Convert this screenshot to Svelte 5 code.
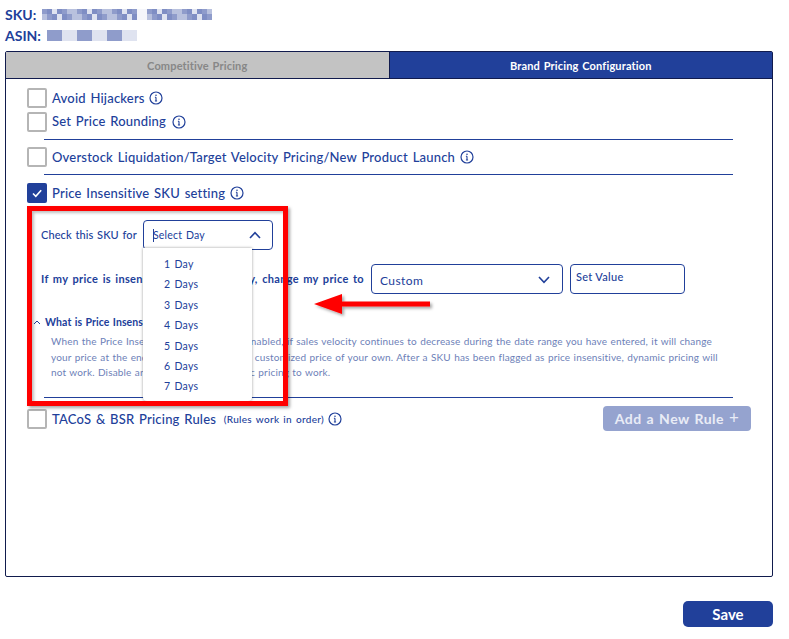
<script>
  // mosaic cells standing in for the blurred SKU / ASIN values
  const shades = ["#8f9ccb", "#c9d0e6", "#a9b4d8", "#dfe3f0", "#7f8ec4", "#b8c1de", "#eef0f7"];
  const skuCells = Array.from({ length: 68 }, (_, i) => (i % 34 === 19 || i % 34 === 20 ? "#f4f5fa" : shades[(i * i + 3 * i) % 7]));
  const asinCells = Array.from({ length: 36 }, (_, i) => shades[(i * 5 + (i % 3)) % 6]);
  const days = ["1 Day", "2 Days", "3 Days", "4 Days", "5 Days", "6 Days", "7 Days"];
</script>

{#snippet info()}
  <svg class="info" viewBox="0 0 14 14" width="14" height="14">
    <circle cx="7" cy="7" r="6" fill="none" stroke="#21409a" stroke-width="1.2" />
    <path d="M7 6.2V10M5.9 10h2.2M5.9 6.2H7" fill="none" stroke="#21409a" stroke-width="1.1" />
    <circle cx="7" cy="4.2" r="0.8" fill="#21409a" />
  </svg>
{/snippet}

<div class="page">
  <div class="ids">
    <div class="id-row sku">
      <b>SKU:</b>
      <span class="mosaic sku-grid">{#each skuCells as c}<i style:background={c}></i>{/each}</span>
    </div>
    <div class="id-row asin">
      <b>ASIN:</b>
      <span class="mosaic asin-grid">{#each asinCells as c}<i style:background={c}></i>{/each}</span>
    </div>
  </div>

  <div class="card">
    <div class="tabs">
      <div class="tab off">Competitive Pricing</div>
      <div class="tab on">Brand Pricing Configuration</div>
    </div>

    <div class="body">
      <label class="check first"><span class="box"></span>Avoid Hijackers {@render info()}</label>
      <label class="check second"><span class="box"></span><span class="up">Set Price Rounding</span>{@render info()}</label>
      <hr class="rule r1" />
      <label class="check"><span class="box"></span>Overstock Liquidation/Target Velocity Pricing/New Product Launch {@render info()}</label>
      <hr class="rule r2" />
      <label class="check"><span class="box checked">
        <svg viewBox="0 0 20 20" width="20" height="20"><path d="M6 10.5l2.8 2.8L14.2 7.2" fill="none" stroke="#fff" stroke-width="1.6" /></svg>
      </span>Price Insensitive SKU setting {@render info()}</label>

      <div class="settings">
        <div class="line one">
          <span class="lbl">Check this SKU for</span>
          <div class="select day">
            <span class="caret"></span>Select Day
            <svg viewBox="0 0 12 8" width="12" height="8"><path d="M1 7l5-5.4L11 7" fill="none" stroke="#21409a" stroke-width="1.6" /></svg>
          </div>
        </div>
        <div class="line two">
          <span class="lbl strong">If my price is insensitive on the last day, change my price to</span>
          <div class="select custom">
            Custom
            <svg viewBox="0 0 12 8" width="12" height="8"><path d="M1 1l5 5.4L11 1" fill="none" stroke="#21409a" stroke-width="1.6" /></svg>
          </div>
          <div class="value">Set Value</div>
        </div>
        <div class="what">
          <svg viewBox="0 0 8 6" width="8" height="6"><path d="M1 5l3-3 3 3" fill="none" stroke="#21409a" stroke-width="1" /></svg>
          What is Price Insensitive SKU setting?
        </div>
        <p class="help">
          When the Price Insensitive SKU setting is enabled, if sales velocity continues to decrease during the date range you have entered, it will change<br />
          your price at the end of the date range to a customized price of your own. After a SKU has been flagged as price insensitive, dynamic pricing will<br />
          not work. Disable and re-enable for dynamic pricing to work.
        </p>
      </div>
      <hr class="rule r3" />

      <div class="rules-row">
        <label class="check tacos"><span class="box"></span>TACoS &amp; BSR Pricing Rules <small>(Rules work in order)</small> {@render info()}</label>
        <button class="add">Add a New Rule <span>+</span></button>
      </div>
    </div>
  </div>

  <div class="foot"><button class="save">Save</button></div>

  <!-- overlays: open dropdown and the red annotation on top of the page -->
  <ul class="menu">
    {#each days as d}<li>{d}</li>{/each}
  </ul>
  <div class="redbox"></div>
  <svg class="arrow" viewBox="0 0 124 28" width="124" height="28">
    <defs>
      <filter id="sh" x="-10%" y="-30%" width="125%" height="170%">
        <feDropShadow dx="2" dy="2" stdDeviation="1.5" flood-color="#000" flood-opacity="0.35" />
      </filter>
    </defs>
    <path d="M1 12L29 2V9.5H117V14.5H29V22Z" fill="#f00" filter="url(#sh)" />
  </svg>
</div>

<style>
  :global(body) {
    margin: 0;
    background: #fff;
  }

  .page {
    position: relative;
    width: 789px;
    height: 639px;
    overflow: hidden;
    font-family: Lato, "Open Sans", sans-serif;
    color: #21409a;
    box-sizing: border-box;
    padding: 4px 16px 0 5px;
  }

  .id-row {
    display: flex;
    align-items: center;
    height: 20px;
    font-size: 14px;
    color: #21409a;
  }

  .id-row b {
    font-weight: 700;
    width: 37px;
  }

  .asin {
    margin-top: 1px;
  }

  .asin b {
    width: 42px;
  }

  .ids {
    height: 42px;
  }

  .mosaic {
    display: grid;
    height: 11px;
    grid-template-rows: 1fr 1fr;
    grid-auto-flow: row;
  }

  .sku-grid {
    width: 170px;
    grid-template-columns: repeat(34, 1fr);
  }

  .asin-grid {
    width: 90px;
    grid-template-columns: repeat(18, 1fr);
  }

  .mosaic i {
    display: block;
  }

  .card {
    margin-top: 5px;
    width: 768px;
    height: 526px;
    box-sizing: border-box;
    border: 1px solid #111b4d;
    border-radius: 2px;
    display: flex;
    flex-direction: column;
  }

  .tabs {
    display: flex;
    height: 26px;
    border-bottom: 1px solid #111b4d;
    font-size: 11px;
    font-weight: 700;
    letter-spacing: 0.15px;
    word-spacing: 1px;
  }

  .tab {
    flex: 1;
    display: flex;
    align-items: center;
    justify-content: center;
  }

  .off {
    background: #c3c3c3;
    color: #878787;
    border-right: 1px solid #111b4d;
  }

  .on {
    background: #21409a;
    color: #fff;
  }

  .body {
    padding: 9px 21px 0 21px;
    display: flex;
    flex-direction: column;
  }

  .check {
    display: flex;
    align-items: center;
    height: 20px;
    font-size: 13px;
    font-weight: 500;
    letter-spacing: 0.2px;
    word-spacing: 1.2px;
    white-space: pre;
  }

  .second {
    margin-top: 4px;
  }

  .up {
    margin: -2px 6px 0 0;
  }

  .box {
    flex: none;
    box-sizing: border-box;
    width: 20px;
    height: 20px;
    margin-right: 5px;
    border: 2px solid #b5b5b5;
    border-radius: 2px;
    background: #fff;
  }

  .box.checked {
    background: #21409a;
    border: 0;
    display: block;
  }

  .box svg {
    display: block;
  }

  .info {
    flex: none;
  }

  .rule {
    border: 0;
    height: 1px;
    background: #21409a;
    margin: 0 18px 0 17px;
  }

  .r1 {
    margin-top: 7px;
    margin-bottom: 7px;
  }

  .r2 {
    margin-top: 7px;
    margin-bottom: 8px;
  }

  .settings {
    height: 194px;
    padding-left: 14px;
    box-sizing: border-box;
    padding-top: 17px;
  }

  .line {
    display: flex;
    align-items: center;
    height: 30px;
  }

  .two {
    margin-top: 14px;
  }

  .lbl {
    font-size: 11px;
    font-weight: 500;
    letter-spacing: 0.1px;
    word-spacing: 0.8px;
    white-space: nowrap;
    margin-top: -2px;
  }

  .one .lbl {
    width: 102px;
  }

  .strong {
    width: 330px;
    font-weight: 700;
    letter-spacing: 0.3px;
    word-spacing: 1px;
    text-align: justify;
    text-align-last: justify;
    white-space: nowrap;
    box-sizing: border-box;
    padding-right: 7px;
  }

  .select {
    box-sizing: border-box;
    height: 30px;
    border: 1px solid #21409a;
    border-radius: 4px;
    display: flex;
    align-items: center;
    justify-content: space-between;
    background: #fff;
  }

  .day {
    width: 130px;
    padding: 0 11px 0 9px;
    font-size: 10.5px;
    letter-spacing: 0.2px;
    word-spacing: 0.8px;
    justify-content: flex-start;
  }

  .day svg {
    margin-left: auto;
  }

  .caret {
    width: 1px;
    height: 13px;
    background: #21409a;
    margin-right: -1px;
  }

  .custom {
    width: 192px;
    padding: 2px 12px 0 8px;
    font-size: 12px;
    letter-spacing: 0.4px;
  }

  .value {
    box-sizing: border-box;
    width: 115px;
    height: 30px;
    margin-left: 7px;
    padding: 5px 0 0 5px;
    border: 1px solid #21409a;
    border-radius: 4px;
    font-size: 11px;
    font-weight: 500;
    letter-spacing: 0.3px;
  }

  .what {
    display: flex;
    align-items: center;
    gap: 4px;
    margin: 22px 0 0 -8px;
    font-size: 10.5px;
    font-weight: 700;
    letter-spacing: 0.1px;
    word-spacing: 0.6px;
    white-space: nowrap;
  }

  .help {
    margin: 6px 0 0 10px;
    font-size: 10px;
    line-height: 15.5px;
    letter-spacing: 0.16px;
    word-spacing: 0.58px;
    color: #6d7fb8;
    white-space: nowrap;
  }

  .rules-row {
    display: flex;
    align-items: center;
    justify-content: space-between;
    height: 25px;
    margin-top: 8px;
    padding-right: 0;
  }

  .tacos small {
    font-size: 10px;
    letter-spacing: 0.3px;
    margin: 0 4px 0 3px;
  }

  .add {
    width: 148px;
    height: 25px;
    border: 0;
    border-radius: 4px;
    background: #95a3cf;
    color: #e9ecf6;
    font: 700 14px Lato, sans-serif;
    letter-spacing: 0.5px;
    word-spacing: 1px;
    padding: 0;
  }

  .add span {
    font-weight: 400;
    font-size: 17px;
    line-height: 14px;
  }

  .foot {
    display: flex;
    justify-content: flex-end;
    margin-top: 24px;
  }

  .save {
    width: 90px;
    height: 26px;
    border: 0;
    border-radius: 5px;
    background: #21409a;
    color: #fff;
    font: 700 15px Lato, sans-serif;
    padding: 0;
  }

  .menu {
    position: absolute;
    left: 143px;
    top: 248px;
    width: 109px;
    height: 153px;
    box-sizing: border-box;
    margin: 0;
    padding: 6px 0 0 21px;
    list-style: none;
    background: #fff;
    border-radius: 0 0 4px 4px;
    box-shadow: 0 0 3px rgba(0, 0, 0, 0.4);
    font-size: 10.5px;
    letter-spacing: 0.3px;
    word-spacing: 1px;
  }

  .menu li {
    height: 20.4px;
    line-height: 20.4px;
  }

  .redbox {
    position: absolute;
    left: 27px;
    top: 206px;
    width: 261px;
    height: 200px;
    box-sizing: border-box;
    border: 5px solid #f00;
    box-shadow: 2px 2px 3px rgba(0, 0, 0, 0.35), inset 2px 2px 3px rgba(0, 0, 0, 0.25);
  }

  .arrow {
    position: absolute;
    left: 313px;
    top: 292px;
  }
</style>
